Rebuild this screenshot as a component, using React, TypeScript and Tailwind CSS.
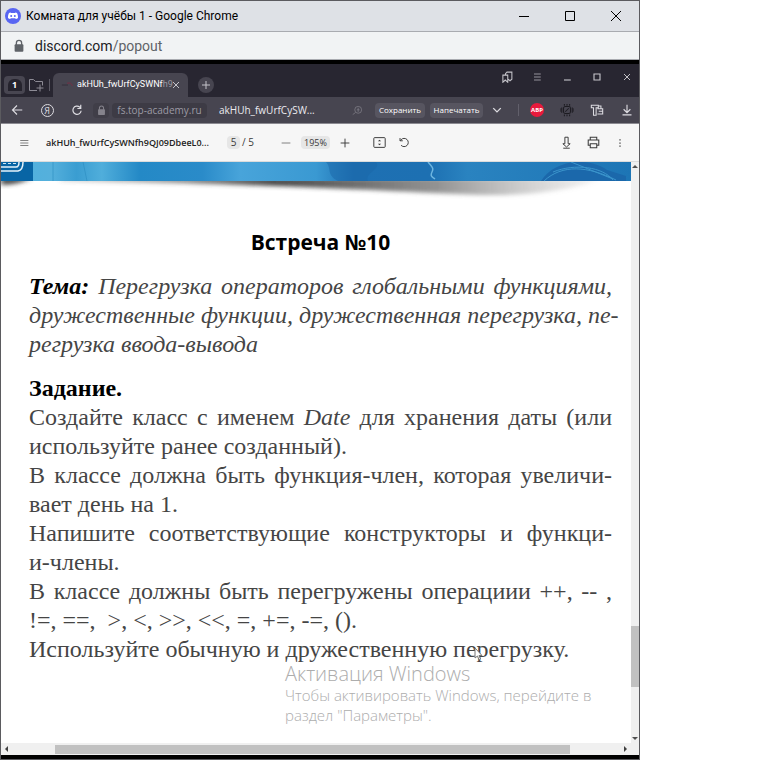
import type { ReactNode } from "react";

type IconButtonProps = { label: string; className?: string; children: ReactNode };

function IconButton({ label, className = "w-[22px]", children }: IconButtonProps) {
  return (
    <button type="button" aria-label={label} className={`flex h-5 shrink-0 items-center justify-center ${className}`}>
      {children}
    </button>
  );
}

type IconProps = { size?: number; width?: number; box?: string; children: ReactNode };

function Icon({ size = 16, width = 1, box = "0 0 16 16", children }: IconProps) {
  return (
    <svg width={size} height={size} viewBox={box} fill="none" stroke="currentColor" strokeWidth={width} aria-hidden="true" className="shrink-0">
      {children}
    </svg>
  );
}

function Lock({ size }: { size: number }) {
  return (
    <Icon size={size} width={1.5}>
      <rect x="3" y="6" width="10" height="8.5" rx="1" fill="currentColor" stroke="none" />
      <path d="M5 7V4.5a3 3 0 0 1 6 0V7" />
    </Icon>
  );
}

function TitleBar() {
  return (
    <header className="flex h-[31px] items-center border-b border-[#a9abb0] bg-[#dee1e6] pl-1 text-black">
      <svg width="16" height="16" viewBox="0 0 16 16" aria-hidden="true" className="shrink-0">
        <circle cx="8" cy="8" r="8" fill="#5865f2" />
        <path
          d="M5.6 4.6c-.8.1-1.4.4-1.7.6C3.2 6.5 2.9 8.4 3 10c.7.6 1.5.9 2.2 1.1l.5-.8h4.6l.5.8c.7-.2 1.5-.5 2.2-1.1.1-1.6-.2-3.5-.9-4.8-.3-.2-.9-.5-1.7-.6l-.3.5H5.9z"
          fill="#fff"
        />
        <circle cx="6.2" cy="8" r="1" fill="#5865f2" />
        <circle cx="9.8" cy="8" r="1" fill="#5865f2" />
      </svg>
      <h1 className="ml-[5px] grow whitespace-nowrap font-['Roboto','Noto_Sans',sans-serif] text-xs">Комната для учёбы 1 - Google Chrome</h1>
      <div className="flex">
        <IconButton label="Свернуть" className="w-[46px]">
          <Icon size={12} box="0 0 12 12"><path d="M1 6.5h10" /></Icon>
        </IconButton>
        <IconButton label="Развернуть" className="w-[46px]">
          <Icon size={12} box="0 0 12 12"><path d="M1.5 1.5h9v9h-9z" /></Icon>
        </IconButton>
        <IconButton label="Закрыть" className="w-[46px]">
          <Icon size={12} box="0 0 12 12"><path d="M1 1l10 10M11 1L1 11" /></Icon>
        </IconButton>
      </div>
    </header>
  );
}

function AddressBar() {
  return (
    <div className="flex h-7 items-center border-b border-[#a9abb0] bg-[#f1f3f4] pl-[11px] text-[#5f6368]">
      <Lock size={14} />
      <p className="ml-[9px] font-['Roboto','Noto_Sans',sans-serif] text-sm">
        <span className="text-[#202124]">discord.com</span>/popout
      </p>
    </div>
  );
}

function TabStrip() {
  return (
    <div className="flex h-[33px] items-end bg-[#282631] text-[#c5c4ca]">
      <div className="flex h-6 items-center pl-[3px]">
        <button type="button" aria-label="Группы вкладок" className="flex h-[18px] w-[21px] items-center justify-center rounded-sm bg-[#484651]">
          <span className="flex h-3 w-[14px] items-center justify-center rounded-t-md bg-[#25232d] text-[9px] font-bold text-white">1</span>
        </button>
        <IconButton label="Новая группа" className="w-[22px] text-[#8d8b95]">
          <Icon><path d="M9 13.5H1.5v-11h4l2 2h7v4M12 7.5v7M8.5 11h7" /></Icon>
        </IconButton>
        <span className="ml-[2px] h-3 w-px bg-[#5c5a65]" />
      </div>
      <div className="ml-[3px] flex h-6 w-[135px] items-center rounded-t-md bg-[#474550] pl-2">
        <Icon size={14}>
          <path d="M1 8h7" stroke="#332b38" width={2} />
          <path d="M7 6c3-1 5 0 6 3" stroke="#7d2942" />
        </Icon>
        <span className="ml-[2px] w-[91px] whitespace-nowrap font-['Roboto','Noto_Sans',sans-serif] text-[9px] text-white">
          akHUh_fwUrfCySWNf<span className="text-[#9b99a3]">h9</span>
        </span>
        <IconButton label="Закрыть вкладку" className="w-4">
          <Icon size={8} box="0 0 8 8"><path d="M1 1l6 6M7 1L1 7" /></Icon>
        </IconButton>
      </div>
      <div className="flex h-6 items-center pl-[10px]">
        <button type="button" aria-label="Новая вкладка" className="flex size-4 items-center justify-center rounded-full bg-[#474550]">
          <Icon size={10} box="0 0 10 10"><path d="M5 1v8M1 5h8" /></Icon>
        </button>
      </div>
      <div className="ml-auto flex gap-2 self-start pr-[1px] pt-[3px]">
        <IconButton label="Закладки">
          <Icon size={12} width={1.4}><path d="M2.5 5.5H9V15l-3.300-3-3.200 3zM6 5V3.500L8 1.500h6.500V11L12 13l-2.500-2" /></Icon>
        </IconButton>
        <IconButton label="Меню" className="w-[22px] text-[#94929b]">
          <Icon size={12} width={1.4}><path d="M4 4h9M4 8h9M4 12h9" /></Icon>
        </IconButton>
        <IconButton label="Свернуть окно">
          <Icon size={12} width={1.5}><path d="M4 12h9" /></Icon>
        </IconButton>
        <IconButton label="Развернуть окно">
          <Icon size={12} width={1.5}><path d="M4 4h8v8H4z" /></Icon>
        </IconButton>
        <IconButton label="Закрыть окно">
          <Icon size={12} width={1.3}><path d="M4 4l8 8M12 4l-8 8" /></Icon>
        </IconButton>
      </div>
    </div>
  );
}

function Toolbar() {
  return (
    <div className="flex h-[27px] items-center border-b border-[#8b8a91] bg-[#474550] pl-[5px] pr-[1px] text-[#dddce1]">
      <div className="flex gap-2">
        <IconButton label="Назад">
          <Icon size={12} width={1.5}><path d="M15 8H2M8 2L2 8l6 6" /></Icon>
        </IconButton>
        <button type="button" aria-label="Яндекс" className="flex h-5 w-[22px] items-center justify-center">
          <span className="flex size-[13px] items-center justify-center rounded-full border border-current text-[9px] leading-none">Я</span>
        </button>
        <IconButton label="Обновить">
          <Icon size={12} width={1.6}><path d="M13.5 9A5.5 5.5 0 1 1 11.5 4L13 5.5M13 1v5H8.5" /></Icon>
        </IconButton>
      </div>
      <span className="ml-[5px] flex h-[15px] w-4 items-center justify-center rounded-sm bg-[#403e48] text-[#85838c]">
        <Lock size={11} />
      </span>
      <span className="ml-[3px] flex h-[15px] w-[95px] items-center justify-center whitespace-nowrap rounded-sm bg-[#3d3b45] text-[10px] text-[#9c9aa4]">
        fs.top-academy.ru
      </span>
      <span className="ml-3 grow whitespace-nowrap text-[10px] text-[#ecebef]">akHUh_fwUrfCySW...</span>
      <IconButton label="Поиск" className="w-[22px] text-[#85838c]">
        <Icon size={11}><circle cx="9" cy="7" r="5" /><path d="M5 11l-4 3M9 4v6M7 7h4" /></Icon>
      </IconButton>
      <button type="button" className="ml-[7px] h-[15px] w-[50px] whitespace-nowrap rounded-sm bg-[#575560] text-[8px] leading-none text-white">Сохранить</button>
      <button type="button" className="ml-[5px] h-[15px] w-[53px] whitespace-nowrap rounded-sm bg-[#575560] text-[8px] leading-none text-white">Напечатать</button>
      <IconButton label="Ещё" className="ml-[3px] w-[22px]">
        <Icon size={10} width={2.2}><path d="M2 5l6 6 6-6" /></Icon>
      </IconButton>
      <span className="ml-[10px] mr-[7px] h-3 w-px bg-[#62606b]" />
      <div className="flex gap-2">
        <button type="button" aria-label="Adblock Plus" className="flex h-5 w-[22px] items-center justify-center">
          <span className="flex size-[14px] items-center justify-center rounded-full bg-[#e8193c] text-[6px] font-bold leading-none text-white">ABP</span>
        </button>
        <IconButton label="Расширение" className="w-[22px] text-[#1d1c22]">
          <Icon size={14} width={1.2}>
            <rect x="4" y="4" width="8" height="8" rx="2" />
            <path d="M6 10l4-4M5 1v2M8 1v2M11 1v2M5 13v2M8 13v2M11 13v2M2 5v6M14 5v6M0 6v4M16 6v4" />
          </Icon>
        </IconButton>
        <IconButton label="Коллекции">
          <Icon size={14} width={1.2}><path d="M1.5 2.500h8v3H7V14H4V5.500H1.500zM9.500 3.500h3V6M8.500 6.500h6v6h-6M10 9.500h4" /></Icon>
        </IconButton>
        <IconButton label="Загрузки">
          <Icon size={12} width={1.5}><path d="M8 1v10M3.5 7L8 11.5 12.5 7M2 14.5h12" /></Icon>
        </IconButton>
      </div>
    </div>
  );
}

function PdfToolbar() {
  return (
    <div className="flex h-[38px] items-center border-b border-[#dcdcdc] bg-[#f6f6f6] pl-[12px] pr-[8px] text-[#3b3b3b]">
      <IconButton label="Содержание">
        <Icon size={10}><path d="M2 4h13M2 8h13M2 12h13" /></Icon>
      </IconButton>
      <span className="ml-[11px] w-[181px] whitespace-nowrap text-[9px] font-semibold text-[#222]">akHUh_fwUrfCySWNfh9QJ09DbeeL0...</span>
      <label className="flex items-center whitespace-nowrap text-[10px]">
        <input aria-label="Страница" defaultValue="5" className="mr-[2px] h-[13px] w-[13px] rounded-sm bg-[#e6e6e6] text-center" />
        / 5
      </label>
      <div className="ml-[21px] flex items-center">
        <IconButton label="Уменьшить">
          <Icon size={10}><path d="M1 8h14" /></Icon>
        </IconButton>
        <input aria-label="Масштаб" defaultValue="195%" className="mx-1 h-[13px] w-[29px] rounded-sm bg-[#e6e6e6] text-center text-[9px]" />
        <IconButton label="Увеличить">
          <Icon size={10} width={1.5}><path d="M8 1v14M1 8h14" /></Icon>
        </IconButton>
      </div>
      <IconButton label="По размеру страницы" className="ml-[13px] w-[22px]">
        <Icon size={13} width={1.2}>
          <rect x="1" y="2" width="14" height="12" rx="1" />
          <path d="M6 6.5L8 4.5l2 2zM6 9.5l2 2 2-2z" fill="currentColor" stroke="none" />
        </Icon>
      </IconButton>
      <IconButton label="Повернуть" className="ml-[3px] w-[22px]">
        <Icon size={11} width={1.4}><path d="M3 12a6 6 0 1 0 0-8L1.5 5.5M1.5 1.5v4h4" /></Icon>
      </IconButton>
      <div className="ml-auto flex gap-[5px]">
        <IconButton label="Скачать">
          <Icon size={13} width={1.2}><path d="M6 1.5h4v8h2.5L8 13.5l-4.500-4H6zM4 15h8" /></Icon>
        </IconButton>
        <IconButton label="Печать">
          <Icon size={13} width={1.3}><path d="M4 5V1.5h8V5M4 11.5H1.5V5h13v6.5H12M4 9.5h8v5H4z" /></Icon>
        </IconButton>
        <IconButton label="Другие действия">
          <Icon size={10}><path d="M8 2v2M8 7v2M8 12v2" strokeWidth={2} /></Icon>
        </IconButton>
      </div>
    </div>
  );
}

function Banner() {
  return (
    <svg viewBox="0 0 630 42" preserveAspectRatio="none" aria-hidden="true" className="block h-[42px] w-full">
      <defs>
        <linearGradient id="sky" x1="0" x2="1">
          <stop offset="0" stopColor="#4db0de" />
          <stop offset=".08" stopColor="#55b0dc" />
          <stop offset=".12" stopColor="#3a9dd1" />
          <stop offset=".16" stopColor="#50aedb" />
          <stop offset=".22" stopColor="#2489c6" />
          <stop offset=".32" stopColor="#2a8bc9" />
          <stop offset=".38" stopColor="#48a4da" />
          <stop offset=".5" stopColor="#3a99d2" />
          <stop offset=".56" stopColor="#1e70b3" />
          <stop offset=".68" stopColor="#1d70b2" />
          <stop offset=".74" stopColor="#2a83c0" />
          <stop offset="1" stopColor="#1d75b5" />
        </linearGradient>
        <linearGradient id="shade" x1="0" x2="1">
          <stop offset="0" stopColor="#555" stopOpacity=".3" />
          <stop offset=".4" stopColor="#333" stopOpacity=".9" />
          <stop offset=".7" stopColor="#666" stopOpacity=".7" />
          <stop offset="1" stopColor="#999" stopOpacity=".1" />
        </linearGradient>
        <filter id="soften" x="-10%" y="-50%" width="120%" height="200%">
          <feGaussianBlur stdDeviation="3 2" />
        </filter>
      </defs>
      <path d="M60 16h540C580 27 530 34 480 33 390 30 290 22 60 19z" fill="url(#shade)" filter="url(#soften)" />
      <path d="M0 16h30Q18 23 0 23z" fill="#444" filter="url(#soften)" />
      <path d="M0 0h630v19H0z" fill="url(#sky)" />
      <path d="M52 0v19M82 0l4 19" stroke="#2b8cc0" opacity=".6" />
      <path d="M325 0c6 6 0 13 12 19h30c-4-8 14-12 8-19z" fill="#1a66a8" opacity=".5" />
      <path d="M427 0c4 5 6 6 4 10s0 5 3 7" stroke="#6db5e0" strokeWidth="1.5" fill="none" />
      <path d="M540 19c14-22 48-24 66-11l19 6v5z" fill="#1b68ab" />
      <path d="M543 19c18-17 44-15 72-1M552 10c22-9 50-5 60 8M570 0l42 17" stroke="#3b95cc" fill="none" />
      <path d="M0 0h32v19H0z" fill="#0865a5" />
      <path d="M0 9h17Q22 8 22 0M0 5h15Q18 5 18 0" stroke="#e4f2fa" strokeWidth="1.5" fill="none" />
      <path d="M2 1.5h13" stroke="#cfe6f3" strokeDasharray="3 2" />
    </svg>
  );
}

function Line({ children, full = false }: { children: ReactNode; full?: boolean }) {
  return <span className={full ? "block whitespace-nowrap [text-align-last:justify]" : "block whitespace-nowrap"}>{children}</span>;
}

function DocumentPage() {
  return (
    <article className="pb-[79px] pl-7 pr-[19px] pt-6 font-['Liberation_Serif',serif] text-2xl leading-[29px] text-[#454545]">
      <h2 className="text-center font-['Open_Sans',sans-serif] text-[21px] font-bold leading-[29px] text-black">Встреча №10</h2>
      <p className="mt-[15px] italic">
        <Line full><strong className="text-black">Тема:</strong> Перегрузка операторов глобальными функциями,</Line>
        <Line full>дружественные функции, дружественная перегрузка, пе-</Line>
        <Line>регрузка ввода-вывода</Line>
      </p>
      <h3 className="mt-[15px] font-bold text-black">Задание.</h3>
      <p>
        <Line full>Создайте класс с именем <em>Date</em> для хранения даты (или</Line>
        <Line>используйте ранее созданный).</Line>
      </p>
      <p>
        <Line full>В классе должна быть функция-член, которая увеличи-</Line>
        <Line>вает день на 1.</Line>
      </p>
      <p>
        <Line full>Напишите соответствующие конструкторы и функци-</Line>
        <Line>и-члены.</Line>
      </p>
      <p>
        <Line full>В классе должны быть перегружены операциии ++, -- ,</Line>
        <Line>!=, ==,&nbsp; &gt;, &lt;, &gt;&gt;, &lt;&lt;, =, +=, -=, ().</Line>
      </p>
      <p>
        <Line>Используйте обычную и дружественную перегрузку.</Line>
      </p>
    </article>
  );
}

function VerticalScrollbar() {
  return (
    <div className="flex w-2 shrink-0 flex-col items-center bg-[#f0f0f0] text-[#505050]">
      <Icon size={8} box="0 0 8 8"><path d="M1 6l3-3 3 3z" fill="currentColor" stroke="none" /></Icon>
      <span className="grow-[457]" />
      <span className="w-full grow-[61] bg-[#c1c1c1]" />
      <span className="grow-[48]" />
      <Icon size={8} box="0 0 8 8"><path d="M1 2l3 3 3-3z" fill="currentColor" stroke="none" /></Icon>
    </div>
  );
}

function HorizontalScrollbar() {
  return (
    <div className="flex h-3 items-center bg-[#f0f0f0] text-[#404040]">
      <Icon size={12} box="0 0 12 12"><path d="M7 3L4 6l3 3z" fill="currentColor" stroke="none" /></Icon>
      <span className="grow-[42]" />
      <span className="h-[9px] grow-[515] bg-[#c1c1c1]" />
      <span className="grow-[49]" />
      <Icon size={12} box="0 0 12 12"><path d="M5 3l3 3-3 3z" fill="currentColor" stroke="none" /></Icon>
      <span className="w-2" />
    </div>
  );
}

function ActivationNotice() {
  return (
    <aside className="absolute bottom-[18px] left-[284px] whitespace-nowrap font-['Open_Sans',sans-serif] font-light text-[#adadad]">
      <p className="text-[20px] leading-5">Активация Windows</p>
      <p className="mt-px text-[15px] leading-5">Чтобы активировать Windows, перейдите в<br />раздел "Параметры".</p>
    </aside>
  );
}

export default function App() {
  return (
    <div className="min-h-screen bg-white">
      <main className="w-5/6 overflow-hidden border border-[#5b5b5f] bg-white font-['Open_Sans','Noto_Sans',sans-serif]">
        <TitleBar />
        <AddressBar />
        <section aria-label="Демонстрация экрана" className="border-y-4 border-black">
          <TabStrip />
          <Toolbar />
          <PdfToolbar />
          <div className="relative flex">
            <div className="min-w-0 grow">
              <Banner />
              <DocumentPage />
            </div>
            <VerticalScrollbar />
            <ActivationNotice />
            <svg width="9" height="14" viewBox="0 0 9 14" aria-hidden="true" className="absolute bottom-[82px] left-[473px]">
              <path d="M1 1v10l2.5-2 1.5 4 1.5-1L5 8.500h3z" fill="#fff" stroke="#777" />
            </svg>
          </div>
          <HorizontalScrollbar />
        </section>
      </main>
    </div>
  );
}
